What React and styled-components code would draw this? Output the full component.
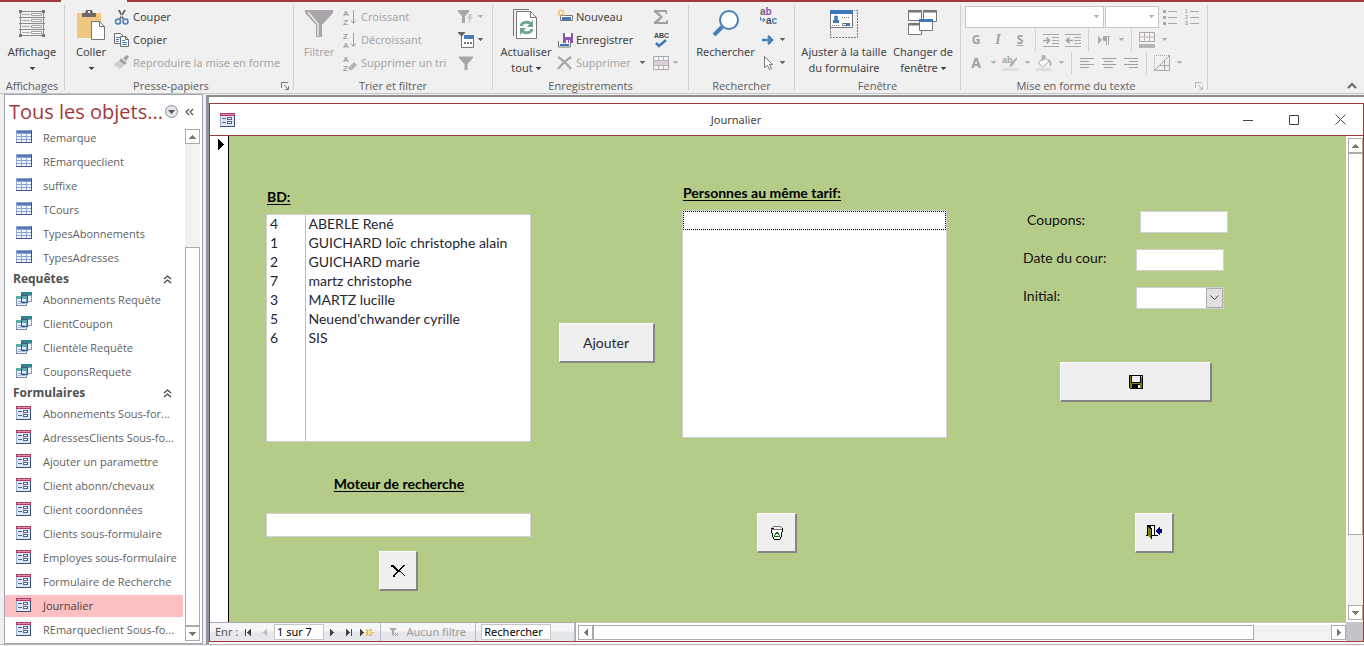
import React from "react";
import styled, { createGlobalStyle, css } from "styled-components";

const RED = "#a4373a";
const GREY = "#ababab";

const Global = createGlobalStyle`
  * { box-sizing: border-box; }
  html, body { margin: 0; padding: 0; }
  body { background: #f0f0f0; color: #444; font: 11px/16px "Noto Sans", "Open Sans", sans-serif; }
  button, input, select { font: inherit; color: inherit; margin: 0; padding: 0; border: 0; border-radius: 0; background: none; }
  svg { display: block; flex: none; overflow: visible; }
  ul { list-style: none; margin: 0; padding: 0; }
`;

const Page = styled.div`
  display: flex;
  flex-direction: column;
  min-height: 100vh;
`;

/* ---------- ribbon ---------- */

const TabEdge = styled.div`
  display: flex;
  height: 2px;
  background: ${RED};
`;
const ActiveTabFoot = styled.div`
  width: 66px;
  margin-left: 61px;
  background: #f0f0f0;
`;
const Ribbon = styled.header`
  display: flex;
  height: 92px;
  padding-top: 3px;
  border-bottom: 1px solid #c6c6c6;
`;
const Group = styled.section`
  display: flex;
  flex-direction: column;
  flex: none;
  width: ${(p) => p.$width}px;
  height: 85px;
  border-right: 1px solid #d0d0d0;
`;
const GroupBody = styled.div`
  display: flex;
  flex: none;
  height: 75px;
  padding-left: ${(p) => p.$inset || 0}px;
`;
const GroupFoot = styled.div`
  display: flex;
  flex: none;
  align-items: center;
  height: 12px;
  font-family: "Open Sans", "Noto Sans", sans-serif;
  line-height: 12px;
  color: #5c5c5c;
`;
const GroupName = styled.span`
  flex: 1;
  text-align: center;
`;
const Launcher = styled.button`
  width: 16px;
  display: flex;
  justify-content: center;
  color: ${(p) => (p.disabled ? "#b8b8b8" : "#777")};
`;
const BigButton = styled.button`
  display: flex;
  flex-direction: column;
  align-items: center;
  width: ${(p) => p.$width}px;
  padding-top: 3px;
  white-space: nowrap;
  color: ${(p) => (p.disabled ? "#a6a6a6" : "#444")};
`;
const BigIcon = styled.span`
  height: 36px;
`;
const BigLine = styled.span`
  display: flex;
  align-items: center;
  gap: 3px;
  height: 16px;
`;
const Stack = styled.div`
  display: flex;
  flex-direction: column;
  width: ${(p) => p.$width}px;
`;
const StackRow = styled.div`
  display: flex;
  align-items: center;
  gap: ${(p) => p.$gap || 0}px;
  height: 23px;
`;
const SmallButton = styled.button`
  display: flex;
  align-items: center;
  gap: 3px;
  height: 22px;
  white-space: nowrap;
  color: ${(p) => (p.disabled ? "#a6a6a6" : "#444")};
`;
const DropButton = styled.button`
  display: flex;
  align-items: center;
  justify-content: center;
  width: 12px;
  height: 22px;
  color: ${(p) => (p.disabled ? "#b4b4b4" : "#666")};
`;
const FontBoxes = styled.div`
  display: flex;
  gap: 1px;
  height: 22px;
  align-items: center;
`;
const FakeSelect = styled.span`
  display: grid;
  align-items: center;
  width: ${(p) => p.$width}px;
  height: 22px;
  border: 1px solid #c6c6c6;
  background: #fff;
  color: #b4b4b4;
  > * { grid-area: 1 / 1; }
  > svg { justify-self: end; margin-right: 4px; pointer-events: none; }
`;
const BareSelect = styled.select`
  appearance: none;
  width: 100%;
  height: 100%;
  opacity: 1;
`;
const Tool = styled.button`
  display: flex;
  align-items: center;
  justify-content: center;
  width: 22px;
  height: 22px;
  font-size: ${(p) => (p.$large ? 14 : 12)}px;
  font-weight: ${(p) => (p.$bold ? 700 : 400)};
  font-style: ${(p) => (p.$italic ? "italic" : "normal")};
  font-family: ${(p) => (p.$italic ? '"Liberation Serif", serif' : "inherit")};
  text-decoration: ${(p) => (p.$underline ? "underline" : "none")};
  color: #a0a0a0;
`;
const ToolSep = styled.span`
  width: 1px;
  height: 22px;
  margin: 0 4px;
  background: #d0d0d0;
`;
const RibbonFill = styled.div`
  flex: 1;
  display: flex;
  align-items: flex-end;
  justify-content: flex-end;
  padding: 0 7px 4px 0;
`;

const Caret = () => (
  <svg width="5" height="3" viewBox="0 0 5 3" shapeRendering="crispEdges">
    <path d="M0 0h5v1H4v1H3v1H2V2H1V1H0z" fill="currentColor" />
  </svg>
);
const Drop = ({ disabled, label }) => (
  <DropButton disabled={disabled} aria-label={label}>
    <Caret />
  </DropButton>
);
const LaunchIcon = () => (
  <svg width="8" height="8" viewBox="0 0 8 8" fill="none" stroke="currentColor">
    <path d="M.5 6V.5H7" />
    <path d="M3 3l4 4M7.500 4v3.500H4" />
  </svg>
);

const S = ({ w = 16, h = 16, children, ...r }) => (
  <svg width={w} height={h} viewBox={`0 0 ${w} ${h}`} fill="none" aria-hidden="true" {...r}>
    {children}
  </svg>
);

const ViewIcon = () => (
  <S w={26} h={32}>
    <g stroke="#8a8a8a">
      <path d="M1.500 2v27M24.500 2v27M0 3.500h26M0 9.500h26M0 15.500h26M0 21.500h26M0 27.500h26" />
      <path d="M3 6.500h8M3 12.500h8M3 18.500h8M3 24.500h8" stroke="#a8a8a8" />
      <path d="M12.500 5.500h10v2h-10zM12.500 11.500h10v2h-10zM12.500 17.500h10v2h-10zM12.500 23.500h10v2h-10z" fill="#fff" stroke="#a0a0a0" />
    </g>
    <path d="M0 2h3v3H0zM23 2h3v3h-3zM0 26h3v3H0zM23 26h3v3h-3z" fill="#767676" />
  </S>
);
const PasteIcon = () => (
  <S w={30} h={32}>
    <path d="M1 5h24v25H1z" fill="#eec880" />
    <path d="M6 5h3l1-3h6l1 3h3v4H6z" fill="#6b6b6b" />
    <path d="M12 3h2v2h-2z" fill="#f0f0f0" />
    <path d="M15.500 13.500h8l5 5v13h-13z" fill="#fff" stroke="#777" />
    <path d="M23.500 13.500v5h5" stroke="#777" />
  </S>
);
const CutIcon = () => (
  <S>
    <path d="M4 1l2 0 4 9-1 1zM12 1l-2 0-5 9 1 1z" fill="#5f5f5f" />
    <circle cx="4" cy="12.500" r="2.500" stroke="#4a7ebb" strokeWidth="1.500" />
    <circle cx="11.500" cy="12.500" r="2.500" stroke="#4a7ebb" strokeWidth="1.500" />
  </S>
);
const CopyIcon = () => (
  <S>
    <path d="M.5 1.500h6l3 3v7h-9z" fill="#fff" stroke="#6b6b6b" />
    <path d="M2 5.500h4M2 7.500h3M2 9.500h3" stroke="#4a7ebb" />
    <path d="M6.500 4.500h5l3 3v7h-8z" fill="#fff" stroke="#6b6b6b" />
    <path d="M11.500 4.500v3h3" stroke="#6b6b6b" />
    <path d="M8 8.500h3M8 10.500h5M8 12.500h5" stroke="#4a7ebb" />
  </S>
);
const BrushIcon = () => (
  <S>
    <path d="M13 0l2 2-3 4-3-3z" fill="#a6a2a6" />
    <path d="M7 3l6 5-3 2-5-4z" fill="#a6a2a6" />
    <path d="M4 6l6 4-4 4H4l1-2-4-1-1-2z" fill="#d2ccd2" />
  </S>
);
const FunnelIcon = ({ big }) => (
  <S w={big ? 28 : 16} h={big ? 32 : 16} viewBox={big ? "0 0 28 32" : "0 -1 28 32"}>
    <path d="M0 2h28v3L17 17v12h-6V17L0 5z" fill="#aaa5aa" />
    {big && <path d="M3 4l10 12v12" stroke="#e8e8e8" strokeWidth="1.500" />}
  </S>
);
const SortIcon = ({ a, b, erase }) => (
  <S fontFamily="Liberation Sans, sans-serif" fontSize="8" fontWeight="700">
    <text x="1" y="7" fill="#a0a0a0">{a}</text>
    <text x="1" y="16" fill="#a0a0a0">{b}</text>
    {erase ? (
      <path d="M12 7l3 3-5 5H7l-1-2z" fill="#b9b3b9" />
    ) : (
      <path d="M11.500 1v13M9 11.500l2.500 3 2.500-3" stroke="#a0a0a0" />
    )}
  </S>
);
const FilterBoltIcon = () => (
  <S>
    <path d="M0 1h11v2L7 7v7H4V7L0 3z" fill="#aaa5aa" />
    <path d="M11 5h3l-1 3h2l-5 7 1-5H9z" fill="#cfc8cf" />
  </S>
);
const FilterFormIcon = () => (
  <S>
    <path d="M0 0h7v1L4 4v3H3V4L0 1z" fill="#666" />
    <path d="M3.500 6v9.500h12V4" fill="#fff" stroke="#777" />
    <path d="M6 3h10v4H6z" fill="#4a7ebb" />
    <path d="M6 10h2v2H6zM9 10h2v2H9zM12 10h2v2h-2z" fill="#777" />
  </S>
);
const RefreshIcon = () => (
  <S w={26} h={32}>
    <path d="M.5 28V1.500H16" stroke="#767676" />
    <path d="M3.500 3.500h14l6 6v21h-20z" fill="#fff" stroke="#767676" />
    <path d="M17.500 3.500v6h6" stroke="#767676" />
    <g stroke="#6fa58b" strokeWidth="3">
      <path d="M8 18c1-4 7-5 10-2M19 21c-1 4-7 5-10 2" />
    </g>
    <path d="M20 12v7h-6zM7 27v-7h6z" fill="#6fa58b" />
  </S>
);
const NewIcon = () => (
  <S>
    <path d="M3.500 6.500h12v5h-12z" fill="#fff" stroke="#767676" />
    <path d="M5 8h9v3H5z" fill="#3f78ba" />
    <path d="M4 0v8M0 4h8M1 1l6 6M7 1L1 7" stroke="#e9b04e" />
    <path d="M3 3h2v2H3z" fill="#fff" />
  </S>
);
const SaveRecordIcon = () => (
  <S>
    <path d="M1.500 9v6h12v-4" stroke="#767676" />
    <path d="M3 12h9v2H3z" fill="#3f78ba" />
    <path d="M6 1h10v10H6z" fill="#8a55ac" />
    <path d="M8 1h6v4H8zM9 8h4v3H9z" fill="#fff" />
    <path d="M11 8h1v3h-1z" fill="#8a55ac" />
  </S>
);
const DeleteIcon = () => (
  <S>
    <path d="M1 2c5 3 9 7 13 12M14 2C9 5 5 9 1 14" stroke="#a9a9a9" strokeWidth="2.500" />
  </S>
);
const SigmaIcon = () => (
  <S>
    <path d="M1 1h13v4h-1l-1-2H5l5 5-5 5h8l1-2h1v4H1v-2l6-5-6-5z" fill="#a0a0a0" />
  </S>
);
const SpellIcon = () => (
  <S fontFamily="Liberation Sans, sans-serif" fontSize="7" fontWeight="700">
    <text x="1" y="6" fill="#444">ABC</text>
    <path d="M3 11l3 3 7-6" stroke="#3f78ba" strokeWidth="2.500" />
  </S>
);
const DataGridIcon = () => (
  <S>
    <path d="M.5 1.500h15v13H.5z" fill="#f6f2f6" stroke="#a9a9a9" />
    <path d="M1 8h14" stroke="#dccfdc" strokeWidth="5" />
    <path d="M5.500 2v3M10.500 2v3M5.500 11v3M10.500 11v3M1 5.500h14M1 10.500h14" stroke="#b9b4b9" />
  </S>
);
const RowColourIcon = () => (
  <S>
    <path d="M.5 .5h15v9H.5z" fill="#f6f2f6" stroke="#a9a9a9" />
    <path d="M5.500 1v9M10.500 1v9M1 5h14" stroke="#b9b4b9" />
    <path d="M0 12h16v4H0z" fill="#b5b5b5" />
  </S>
);
const SearchIcon = () => (
  <S w={28} h={32}>
    <circle cx="17" cy="12" r="9" fill="#fff" stroke="#4a7ebb" strokeWidth="2" />
    <path d="M10 19L2 27" stroke="#4a7ebb" strokeWidth="4" />
  </S>
);
const ReplaceIcon = () => (
  <S fontFamily="Liberation Sans, sans-serif" fontSize="10" fontWeight="700">
    <text x="0" y="6"><tspan fill="#666">a</tspan><tspan fill="#8a55ac">b</tspan></text>
    <text x="6" y="15"><tspan fill="#555">a</tspan><tspan fill="#3f78ba">c</tspan></text>
    <path d="M.5 8v3H5M3 9l2 2-2 2" stroke="#3f78ba" />
  </S>
);
const GoIcon = () => (
  <S>
    <path d="M2 8h9M8 4l4 4-4 4" stroke="#4a7ebb" strokeWidth="2.500" />
  </S>
);
const PointerIcon = () => (
  <S>
    <path d="M4.500 1.500v11l3-2 2 4 2-1-2-4h3z" fill="#fff" stroke="#767676" />
  </S>
);
const FitFormIcon = () => (
  <S w={28} h={32}>
    <path d="M.5 20v9.500h27V2.500H24" stroke="#767676" strokeDasharray="2 1" />
    <path d="M.5 2.500h22v17H.5z" fill="#fff" stroke="#767676" />
    <path d="M0 2h23v4H0z" fill="#3f78ba" />
    <circle cx="6" cy="9.500" r="2" fill="#3f78ba" />
    <path d="M3 15v-2q0-2 3-2t3 2v2z" fill="#3f78ba" />
    <path d="M12 9.500h8M2 17.500h8" stroke="#767676" strokeDasharray="1 1" />
    <path d="M12.500 15.500h7v2h-7z" stroke="#767676" />
    <path d="M16 15h4v3h-4z" fill="#3f78ba" />
  </S>
);
const WindowsIcon = () => (
  <S w={30} h={32}>
    <g fill="#fff" stroke="#767676">
      <path d="M.5 2.500h13v10H.5zM15.500 2.500h13v11h-13zM.5 15.500h13v11H.5z" />
      <path d="M0 3.500h14M15 3.500h14M0 16.500h14" strokeWidth="2" />
      <path d="M11.500 11.500h13v11h-13z" />
    </g>
    <path d="M11 11h14v3H11z" fill="#3f78ba" />
  </S>
);
const BulletsIcon = ({ numbered }) => (
  <S fontFamily="Liberation Sans, sans-serif" fontSize="5" fontWeight="700">
    <path d="M6 2.500h9M6 8.500h9M6 14.500h9" stroke="#a9a9a9" />
    {numbered ? (
      <g fill="#a0a0a0">
        <text x="1" y="4">1</text>
        <text x="1" y="10">2</text>
        <text x="1" y="16">3</text>
      </g>
    ) : (
      <path d="M1 1h3v3H1zM1 7h3v3H1zM1 13h3v3H1z" fill="#a9a9a9" />
    )}
  </S>
);
const IndentIcon = ({ out }) => (
  <S>
    <path d="M0 2.500h16M0 14.500h16M9 5.500h7M9 8.500h7M9 11.500h7" stroke="#a9a9a9" />
    <path d={out ? "M8 8.500H2M4.500 5.500l-3 3 3 3" : "M0 8.500h6M3.500 5.500l3 3-3 3"} stroke="#a0a0a0" strokeWidth="1.500" />
  </S>
);
const DirectionIcon = () => (
  <S>
    <path d="M2 4l4 4-4 4z" fill="#a9a9a9" />
    <path d="M9 4.500h5M10.500 4v9M12.500 4v9" stroke="#a9a9a9" />
    <path d="M11 4H9a2 2 0 000 5h2z" fill="#a9a9a9" />
  </S>
);
const HighlightIcon = () => (
  <S fontFamily="Liberation Sans, sans-serif" fontSize="9" fontWeight="700">
    <text x="0" y="8" fill="#a0a0a0">ab</text>
    <path d="M15 2l-6 6-2 4 3-1 5-7z" fill="#a9a9a9" />
    <path d="M0 13h16v3H0z" fill="#e4dce4" />
  </S>
);
const BucketIcon = () => (
  <S>
    <path d="M8 1.500L2.500 8l4 4L13 6.500z" fill="#fff" stroke="#a9a9a9" />
    <path d="M6.500 6V1h2v4M12 5q4 2 2 6" stroke="#a9a9a9" strokeWidth="1.500" />
    <path d="M0 13h16v3H0z" fill="#e4dce4" />
  </S>
);
const AlignIcon = ({ kind }) => {
  const x = { left: 1, center: 3, right: 6 }[kind];
  return (
    <S>
      <path d={`M1 3.500h14M${x} 6.500h9M1 9.500h14M${x} 12.500h9`} stroke="#a0a0a0" />
    </S>
  );
};
const GridlinesIcon = () => (
  <S>
    <path d="M.5 15V.5H15" stroke="#a9a9a9" strokeDasharray="1 1" />
    <path d="M0 15.500h15.500V0M15 1L1 15M10.500 6v9M5 10.500h10" stroke="#a9a9a9" />
  </S>
);
const ChevronUp = () => (
  <S w={10} h={7}>
    <path d="M1 6l4-4 4 4" stroke="#666" strokeWidth="2" />
  </S>
);

/* ---------- workspace and navigation pane ---------- */

const Workspace = styled.main`
  flex: 1;
  display: flex;
  min-height: 0;
`;
const NavPane = styled.nav`
  display: flex;
  flex-direction: column;
  flex: none;
  width: 199px;
  margin-left: 4px;
  border: 1px solid #a0a4b0;
  background: #fff;
`;
const NavHeader = styled.div`
  display: flex;
  align-items: center;
  height: 31px;
  padding: 2px 3px 0 4px;
`;
const NavTitle = styled.h1`
  flex: 1;
  margin: 0;
  font-family: "Open Sans", "Noto Sans", sans-serif;
  font-size: 20px;
  line-height: 30px;
  font-weight: 400;
  white-space: nowrap;
  color: ${RED};
`;
const HeaderButton = styled.button`
  display: flex;
  justify-content: center;
  width: ${(p) => p.$width}px;
  color: #555;
`;
const NavBody = styled.div`
  display: flex;
  flex: 1;
`;
const NavList = styled.div`
  flex: 1;
  min-width: 0;
  font-family: "Open Sans", "Noto Sans", sans-serif;
`;
const NavHeading = styled.h2`
  display: flex;
  align-items: center;
  justify-content: space-between;
  height: 18px;
  margin: 0;
  padding: 0 11px 0 8px;
  font-size: 12px;
  line-height: 18px;
  color: #505050;
`;
const NavItem = styled.button`
  display: flex;
  align-items: center;
  gap: 11px;
  width: 100%;
  height: 24px;
  padding-left: 11px;
  border: solid transparent;
  border-width: 1px 0;
  background: ${(p) => (p.$active ? "#fcc0c3" : "transparent")};
  background-clip: padding-box;
  white-space: nowrap;
  color: ${(p) => (p.$active ? "#444" : "#5f5f5f")};
  > svg { margin-bottom: 2px; }
`;

const Scroll = styled.div`
  display: flex;
  flex: none;
  flex-direction: ${(p) => (p.$horizontal ? "row" : "column")};
  ${(p) => (p.$horizontal ? css`height: 15px;` : css`width: 15px;`)}
  background: #f2f2f2;
`;
const ScrollEnd = styled.button`
  display: flex;
  flex: none;
  align-items: center;
  justify-content: center;
  width: 15px;
  height: 15px;
  border: 1px solid ${GREY};
  background: #fff;
  color: #777;
`;
const Thumb = styled.div`
  flex: ${(p) => p.$share} 1 0;
  border: 1px solid ${GREY};
  background: #fff;
`;
const Track = styled.div`
  flex: ${(p) => p.$share} 1 0;
`;

const Arrow = ({ dir }) => {
  const d = {
    up: "M3 0h1v1h1v1h1v1h1v1H0V3h1V2h1V1h1z",
    down: "M0 0h7v1H6v1H5v1H4v1H3V3H2V2H1V1H0z",
    left: "M4 0v7H3V6H2V5H1V4H0V3h1V2h1V1h1V0z",
    right: "M0 0h1v1h1v1h1v1h1v1H3v1H2v1H1v1H0z",
  }[dir];
  const tall = dir === "left" || dir === "right";
  return (
    <S w={tall ? 4 : 7} h={tall ? 7 : 4} shapeRendering="crispEdges">
      <path d={d} fill="currentColor" />
    </S>
  );
};
const ScrollBar = ({ horizontal, before, thumb, after }) => (
  <Scroll $horizontal={horizontal}>
    <ScrollEnd aria-label="Défiler en arrière"><Arrow dir={horizontal ? "left" : "up"} /></ScrollEnd>
    {before > 0 && <Track $share={before} />}
    <Thumb $share={thumb} />
    {after > 0 && <Track $share={after} />}
    <ScrollEnd aria-label="Défiler en avant"><Arrow dir={horizontal ? "right" : "down"} /></ScrollEnd>
  </Scroll>
);

const TableIcon = () => (
  <S h={14} shapeRendering="crispEdges">
    <path d="M0 0h16v13H0z" fill="#3d5788" />
    <path d="M0 0h15v12H0z" fill="#8aa5d4" />
    <path d="M1 1h14v2H1z" fill="#5577b3" />
    <path d="M1 4h4v2H1zM6 4h4v2H6zM11 4h4v2h-4zM1 7h4v2H1zM6 7h4v2H6zM11 7h4v2h-4zM1 10h4v2H1zM6 10h4v2H6zM11 10h4v2h-4z" fill="#f2f6fd" />
  </S>
);
const QueryIcon = () => (
  <S shapeRendering="crispEdges">
    <path d="M5 1h11v10H5z" fill="#7d9bb5" />
    <path d="M5 1h11v3H5z" fill="#2f8587" />
    <path d="M12 5h3v5h-3z" fill="#edf3fa" />
    <path d="M0 5h11v10H0z" fill="#6f8fb0" />
    <path d="M0 5h11v3H0z" fill="#5fa8a6" />
    <path d="M1 8h9v6H1z" fill="#edf3fa" />
    <path d="M2 10h3v1H2zM2 12h3v1H2zM6 10h3v1H6zM6 12h3v1H6z" fill="#8aa6c8" />
    <path d="M5 4h6v7H5z" fill="none" stroke="#35598a" />
  </S>
);
const FormIcon = () => (
  <S w={16} h={14} shapeRendering="crispEdges">
    <path d="M0 0h15v14H0z" fill="#3d4f74" />
    <path d="M0 0h14v13H0z" fill="#9db3d8" />
    <path d="M0 0h15v3H0z" fill="#ad3a68" />
    <path d="M1 1h13v1H1z" fill="#dd8fab" />
    <path d="M1 3h13v10H1z" fill="#dfe7f7" />
    <path d="M2 5h4v1H2zM2 9h4v1H2zM7 4h5v3H7zM7 8h5v3H7z" fill="#52638c" />
    <path d="M8 5h3v1H8zM8 9h3v1H8z" fill="#fff" />
  </S>
);
const DoubleUp = () => (
  <S w={9} h={9}>
    <path d="M1 4l3.500-3L8 4M1 8l3.500-3L8 8" stroke="#444" strokeWidth="1.300" />
  </S>
);

const NAV = [
  { icon: TableIcon, items: ["Remarque", "REmarqueclient", "suffixe", "TCours", "TypesAbonnements", "TypesAdresses"] },
  { title: "Requêtes", icon: QueryIcon, items: ["Abonnements Requête", "ClientCoupon", "Clientèle Requête", "CouponsRequete"] },
  {
    title: "Formulaires",
    icon: FormIcon,
    items: [
      "Abonnements Sous-for...",
      "AdressesClients Sous-fo...",
      "Ajouter un paramettre",
      "Client abonn/chevaux",
      "Client coordonnées",
      "Clients sous-formulaire",
      "Employes sous-formulaire",
      "Formulaire de Recherche",
      "Journalier",
      "REmarqueclient Sous-fo...",
    ],
  },
];

const NavScroll = styled.div`
  display: flex;
  padding: 3px 2px 2px 2px;
`;

/* ---------- form window ---------- */

const Desk = styled.div`
  display: flex;
  flex: 1;
  min-width: 0;
  margin: 1px 0 0 3px;
  padding: 6px 0 2px 0;
  border-top: 2px solid #8c8c8c;
  border-left: 3px solid #90949c;
  background: #fff;
`;
const Window = styled.section`
  display: flex;
  flex-direction: column;
  flex: 1;
  min-width: 0;
  border: 1px solid ${RED};
`;
const TitleBar = styled.div`
  display: grid;
  grid-template-columns: 1fr auto 1fr;
  align-items: center;
  height: 32px;
  padding: 0 0 0 10px;
  border-bottom: 1px solid ${RED};
`;
const WindowTitle = styled.h2`
  margin: 0;
  padding-right: 111px;
  font-size: 11px;
  font-weight: 400;
`;
const WindowButtons = styled.div`
  display: flex;
  justify-content: flex-end;
`;
const WindowButton = styled.button`
  display: flex;
  align-items: center;
  justify-content: center;
  width: 46px;
  height: 31px;
`;
const Content = styled.div`
  display: flex;
  flex: 1;
`;
const RecordSelector = styled.div`
  width: 19px;
  padding: 3px 0 0 8px;
  border-right: 1px solid #000;
`;
const Form = styled.form`
  display: grid;
  grid-template-columns: 265px 151px 265px 1fr;
  grid-template-rows: 259px auto;
  flex: 1;
  padding: 47px 0 31px 37px;
  background: #b5cc88;
  font: 14px/20px Lato, "Open Sans", sans-serif;
  color: #111;
`;
const Cell = styled.div`
  display: flex;
  flex-direction: column;
  align-items: ${(p) => p.$align || "stretch"};
  padding-top: ${(p) => p.$top || 0}px;
  padding-left: ${(p) => p.$left || 0}px;
`;
const Caption = styled.label`
  margin-bottom: ${(p) => p.$after || 7}px;
  padding-left: 1px;
  font-weight: 700;
  text-decoration: underline;
  text-underline-offset: 2px;
  color: #000;
`;
const ListFrame = styled.div`
  height: 228px;
  border: 1px solid #d0d0d0;
  background: #fff;
`;
const People = styled.table`
  width: 100%;
  height: 100%;
  border-collapse: collapse;
  color: #1f2633;
  line-height: 18px;
`;
const Num = styled.td`
  width: 38px;
  height: ${(p) => (p.$fill ? "auto" : "19px")};
  padding: 0 0 0 3px;
  border-right: 1px solid #bdbdbd;
  vertical-align: top;
`;
const Name = styled.td`
  padding: 0 0 0 3px;
  vertical-align: top;
`;
const EmptyOption = styled.div`
  height: 19px;
  border: 1px dotted #000;
`;
const PushButton = styled.button`
  display: flex;
  flex: none;
  align-items: center;
  justify-content: center;
  width: ${(p) => p.$width}px;
  height: 40px;
  border: solid;
  border-width: 1px 2px 2px 1px;
  border-color: #fff #858585 #858585 #fff;
  background: #efefef;
  color: #1f2633;
`;
const TextBox = styled.input`
  width: ${(p) => (p.$width ? p.$width + "px" : "100%")};
  height: ${(p) => p.$height || 22}px;
  border: 1px solid #d0d0d0;
  background: #fff;
`;
const Field = styled.div`
  display: flex;
  height: 22px;
  margin: 0 0 16px ${(p) => p.$indent || 0}px;
`;
const FieldLabel = styled.label`
  width: 113px;
  line-height: 18px;
`;
const Combo = styled.span`
  display: grid;
  grid-template-columns: 1fr 17px;
  width: 88px;
  border: 1px solid #d0d0d0;
  background: #fff;
`;
const ComboSelect = styled.select`
  grid-area: 1 / 1 / 2 / 3;
  appearance: none;
`;
const ComboArrow = styled.span`
  grid-area: 1 / 2;
  display: flex;
  align-items: center;
  justify-content: center;
  border: 1px solid #adadad;
  background: #e1e1e1;
  pointer-events: none;
`;
const SideScroll = styled.div`
  display: flex;
  padding: 2px 0 2px 2px;
`;

const Status = styled.div`
  display: flex;
  height: 19px;
  background: linear-gradient(#f6f6f8 0 45%, #e6e7eb 55% 100%);
  color: #555;
`;
const Records = styled.div`
  display: flex;
  align-items: center;
  flex: none;
  width: 366px;
  border: solid #a9acb4;
  border-width: 1px 1px 0 0;
`;
const Section = styled.div`
  display: flex;
  align-items: center;
  gap: ${(p) => p.$gap || 0}px;
  width: ${(p) => p.$width}px;
  height: 18px;
  padding-left: ${(p) => p.$left || 5}px;
  border-right: 1px solid #b9bcc4;
  color: ${(p) => (p.$dim ? "#999" : "#555")};
  white-space: nowrap;
`;
const StepButton = styled.button`
  display: flex;
  align-items: center;
  justify-content: center;
  width: 17px;
  height: 16px;
  color: ${(p) => (p.disabled ? "#bbb" : "#444")};
`;
const StatusInput = styled.input`
  width: ${(p) => p.$width}px;
  height: 16px;
  padding-left: 2px;
  border: 1px solid #c6c6c6;
  background: #fff;
  color: #000;
`;
const StatusName = styled.span`
  width: 25px;
`;
const BottomScroll = styled.div`
  flex: 1;
  padding: 2px 0 2px 2px;
  border-top: 1px solid #c6c6c6;
  background: #fff;
`;
const Corner = styled.div`
  width: 17px;
  background: #c3c5ca;
`;
const Footer = styled.footer`
  height: 3px;
  border-top: 1px solid #b9b9b9;
`;

const StepIcon = ({ kind }) => (
  <S w={kind === "new" ? 14 : 7} h={9} shapeRendering="crispEdges">
    {kind === "first" && <path d="M0 1h1v7H0zM6 1v7H5V7H4V6H3V5H2V4h1V3h1V2h1V1z" fill="currentColor" />}
    {kind === "prev" && <path d="M5 1v7H4V7H3V6H2V5H1V4h1V3h1V2h1V1z" fill="currentColor" />}
    {kind === "next" && <path d="M1 1h1v1h1v1h1v1h1v1H4v1H3v1H2v1H1z" fill="currentColor" />}
    {kind === "last" && <path d="M0 1h1v1h1v1h1v1h1v1H3v1H2v1H1v1H0zM5 1h1v7H5z" fill="currentColor" />}
    {kind === "new" && (
      <>
        <path d="M0 1h1v1h1v1h1v1h1v1H3v1H2v1H1v1H0z" fill="currentColor" />
        <path d="M9 1v7M5.500 4.500h8M6 1.500l6 6M12 1.500l-6 6" stroke="#e5b933" />
        <path d="M8 3h3v3H8z" fill="#f8e38a" />
      </>
    )}
  </S>
);
const FloppyIcon = () => (
  <S w={14} h={14} shapeRendering="crispEdges">
    <path d="M0 0h14v14H1v-1H0z" fill="#000" />
    <path d="M1 1h1v7h10V2h1v11H1z" fill="#808000" />
    <path d="M3 1h8v6H3zM12 1h1v1h-1z" fill="#efefef" />
    <path d="M3 9h8v4H3z" fill="#000" />
    <path d="M9 10h2v3H9z" fill="#efefef" />
  </S>
);
const CrossIcon = () => (
  <S w={14} h={14} shapeRendering="crispEdges">
    <path d="M0 1h3v1h1v1h1v1h1v1h1v1h1V5h1V4h1V3h1V2h1V1h2v1h-1v1h-1v1h-1v1h-1v1H9v1h1v1h1v1h1v1h1v1h1v1h-1v-1h-1v-1h-1v-1h-1v-1H9V8H7v1H6v1H5v1H4v2H2v-2h1v-1h1V9h1V8h1V7H5V6H4V5H3V4H2V3H0z" fill="#000" />
  </S>
);
const BinIcon = () => (
  <S w={14} h={14} shapeRendering="crispEdges">
    <path d="M1 3h12l-2 10H3z" fill="#fff" />
    <path d="M3 0h8v1H3zM2 1h1v1H2zM11 1h1v1h-1zM1 3h11v1H1z" fill="#777" />
    <path d="M1 2h3v1H1zM12 2h1v4h-1zM1 4h1v3H1zM2 7h1v4H2zM11 6h1v5h-1zM3 11h1v2H3zM10 11h1v2h-1zM4 13h6v1H4z" fill="#000" />
    <path d="M6 6h2v1h1v2h1v2H8v-1h1V9H8V8H6v1H5v1h3v1H4V9h1V7h1z" fill="#008000" />
  </S>
);
const DoorIcon = () => (
  <S w={17} h={15} shapeRendering="crispEdges">
    <path d="M1 0h8v10h3v1H0v-1h1z" fill="#000" />
    <path d="M5 1h3v9H5z" fill="#fff" />
    <path d="M1 0h1l4 3v12l-4-4H1z" fill="#000" />
    <path d="M2 2h1v1h1v1h1v9H4v-1H3v-1H2z" fill="#808000" />
    <path d="M10 5h1V4h1V3h1V2h1v2h2v4h-2v2h-1V9h-1V8h-1V7h-1z" fill="#000080" />
  </S>
);

const PEOPLE = [
  [4, "ABERLE René"],
  [1, "GUICHARD loïc christophe alain"],
  [2, "GUICHARD marie"],
  [7, "martz christophe"],
  [3, "MARTZ lucille"],
  [5, "Neuend'chwander cyrille"],
  [6, "SIS"],
];

function RibbonBar() {
  return (
    <Ribbon>
      <Group $width={65}>
        <GroupBody $inset={2}>
          <BigButton $width={60}>
            <BigIcon><ViewIcon /></BigIcon>
            <BigLine>Affichage</BigLine>
            <BigLine><Caret /></BigLine>
          </BigButton>
        </GroupBody>
        <GroupFoot><GroupName>Affichages</GroupName></GroupFoot>
      </Group>

      <Group $width={229}>
        <GroupBody $inset={3}>
          <BigButton $width={46}>
            <BigIcon><PasteIcon /></BigIcon>
            <BigLine>Coller</BigLine>
            <BigLine><Caret /></BigLine>
          </BigButton>
          <Stack>
            <StackRow><SmallButton><CutIcon />Couper</SmallButton></StackRow>
            <StackRow><SmallButton><CopyIcon />Copier</SmallButton></StackRow>
            <StackRow><SmallButton disabled><BrushIcon />Reproduire la mise en forme</SmallButton></StackRow>
          </Stack>
        </GroupBody>
        <GroupFoot>
          <GroupName>Presse-papiers</GroupName>
          <Launcher aria-label="Options du presse-papiers"><LaunchIcon /></Launcher>
        </GroupFoot>
      </Group>

      <Group $width={199}>
        <GroupBody $inset={2}>
          <BigButton $width={46} disabled>
            <BigIcon><FunnelIcon big /></BigIcon>
            <BigLine>Filtrer</BigLine>
          </BigButton>
          <Stack $width={116}>
            <StackRow><SmallButton disabled><SortIcon a="A" b="Z" />Croissant</SmallButton></StackRow>
            <StackRow><SmallButton disabled><SortIcon a="Z" b="A" />Décroissant</SmallButton></StackRow>
            <StackRow><SmallButton disabled><SortIcon a="A" b="Z" erase />Supprimer un tri</SmallButton></StackRow>
          </Stack>
          <Stack>
            <StackRow><SmallButton disabled aria-label="Sélection"><FilterBoltIcon /></SmallButton><Drop disabled label="Choix de sélection" /></StackRow>
            <StackRow><SmallButton aria-label="Options avancées"><FilterFormIcon /></SmallButton><Drop label="Choix avancés" /></StackRow>
            <StackRow><SmallButton disabled aria-label="Activer le filtre"><FunnelIcon /></SmallButton></StackRow>
          </Stack>
        </GroupBody>
        <GroupFoot><GroupName>Trier et filtrer</GroupName></GroupFoot>
      </Group>

      <Group $width={196}>
        <GroupBody $inset={2}>
          <BigButton $width={62}>
            <BigIcon><RefreshIcon /></BigIcon>
            <BigLine>Actualiser</BigLine>
            <BigLine>tout<Caret /></BigLine>
          </BigButton>
          <Stack $width={96}>
            <StackRow><SmallButton><NewIcon />Nouveau</SmallButton></StackRow>
            <StackRow><SmallButton><SaveRecordIcon />Enregistrer</SmallButton></StackRow>
            <StackRow $gap={6}><SmallButton disabled><DeleteIcon />Supprimer</SmallButton><Drop label="Choix de suppression" /></StackRow>
          </Stack>
          <Stack>
            <StackRow><SmallButton disabled aria-label="Totaux"><SigmaIcon /></SmallButton></StackRow>
            <StackRow><SmallButton aria-label="Orthographe"><SpellIcon /></SmallButton></StackRow>
            <StackRow><SmallButton disabled aria-label="Plus"><DataGridIcon /></SmallButton><Drop disabled label="Plus d'options" /></StackRow>
          </Stack>
        </GroupBody>
        <GroupFoot><GroupName>Enregistrements</GroupName></GroupFoot>
      </Group>

      <Group $width={106}>
        <GroupBody $inset={2}>
          <BigButton $width={69}>
            <BigIcon><SearchIcon /></BigIcon>
            <BigLine>Rechercher</BigLine>
          </BigButton>
          <Stack>
            <StackRow><SmallButton aria-label="Remplacer"><ReplaceIcon /></SmallButton></StackRow>
            <StackRow><SmallButton aria-label="Atteindre"><GoIcon /></SmallButton><Drop label="Choix atteindre" /></StackRow>
            <StackRow><SmallButton aria-label="Sélectionner"><PointerIcon /></SmallButton><Drop label="Choix sélectionner" /></StackRow>
          </Stack>
        </GroupBody>
        <GroupFoot><GroupName>Rechercher</GroupName></GroupFoot>
      </Group>

      <Group $width={166}>
        <GroupBody $inset={4}>
          <BigButton $width={90}>
            <BigIcon><FitFormIcon /></BigIcon>
            <BigLine>Ajuster à la taille</BigLine>
            <BigLine>du formulaire</BigLine>
          </BigButton>
          <BigButton $width={68}>
            <BigIcon><WindowsIcon /></BigIcon>
            <BigLine>Changer de</BigLine>
            <BigLine>fenêtre<Caret /></BigLine>
          </BigButton>
        </GroupBody>
        <GroupFoot><GroupName>Fenêtre</GroupName></GroupFoot>
      </Group>

      <Group $width={247}>
        <GroupBody $inset={4}>
          <Stack>
            <StackRow>
              <FontBoxes>
                <FakeSelect $width={139}><BareSelect disabled aria-label="Police" /><Caret /></FakeSelect>
                <FakeSelect $width={54}><BareSelect disabled aria-label="Taille de police" /><Caret /></FakeSelect>
              </FontBoxes>
              <Tool disabled aria-label="Puces"><BulletsIcon /></Tool>
              <Tool disabled aria-label="Numérotation"><BulletsIcon numbered /></Tool>
            </StackRow>
            <StackRow>
              <Tool disabled $bold>G</Tool>
              <Tool disabled $bold $italic $large>I</Tool>
              <Tool disabled $bold $underline>S</Tool>
              <ToolSep />
              <Tool disabled aria-label="Augmenter le retrait"><IndentIcon /></Tool>
              <Tool disabled aria-label="Diminuer le retrait"><IndentIcon out /></Tool>
              <ToolSep />
              <Tool disabled aria-label="De gauche à droite"><DirectionIcon /></Tool>
              <Drop disabled label="Choix de direction" />
              <ToolSep />
              <Tool disabled aria-label="Couleur de ligne"><RowColourIcon /></Tool>
              <Drop disabled label="Choix de couleur de ligne" />
            </StackRow>
            <StackRow>
              <Tool disabled $bold $large>A</Tool>
              <Drop disabled label="Choix de couleur de police" />
              <Tool disabled aria-label="Surlignage"><HighlightIcon /></Tool>
              <Drop disabled label="Choix de surlignage" />
              <Tool disabled aria-label="Couleur de fond"><BucketIcon /></Tool>
              <Drop disabled label="Choix de couleur de fond" />
              <ToolSep />
              <Tool disabled aria-label="Aligner à gauche"><AlignIcon kind="left" /></Tool>
              <Tool disabled aria-label="Centrer"><AlignIcon kind="center" /></Tool>
              <Tool disabled aria-label="Aligner à droite"><AlignIcon kind="right" /></Tool>
              <ToolSep />
              <Tool disabled aria-label="Quadrillage"><GridlinesIcon /></Tool>
              <Drop disabled label="Choix de quadrillage" />
            </StackRow>
          </Stack>
        </GroupBody>
        <GroupFoot>
          <GroupName>Mise en forme du texte</GroupName>
          <Launcher disabled aria-label="Options du texte"><LaunchIcon /></Launcher>
        </GroupFoot>
      </Group>
      <RibbonFill>
        <button aria-label="Réduire le ruban"><ChevronUp /></button>
      </RibbonFill>
    </Ribbon>
  );
}

function Navigation() {
  return (
    <NavPane>
      <NavHeader>
        <NavTitle>Tous les objets...</NavTitle>
        <HeaderButton $width={16} aria-label="Catégories">
          <S w={13} h={13}>
            <circle cx="6.500" cy="6.500" r="6" fill="#e3e6ea" stroke="#8a8f98" />
            <path d="M3 5h7L6.500 9z" fill="#555" />
          </S>
        </HeaderButton>
        <HeaderButton $width={20} aria-label="Réduire le volet">
          <S w={9} h={8}>
            <path d="M4 1L1 4l3 3M8 1L5 4l3 3" stroke="#555" strokeWidth="1.300" />
          </S>
        </HeaderButton>
      </NavHeader>
      <NavBody>
        <NavList>
          {NAV.map(({ title, icon: Icon, items }) => (
            <React.Fragment key={title || "tables"}>
              {title && <NavHeading>{title}<DoubleUp /></NavHeading>}
              <ul>
                {items.map((name) => (
                  <li key={name}>
                    <NavItem $active={name === "Journalier"}><Icon />{name}</NavItem>
                  </li>
                ))}
              </ul>
            </React.Fragment>
          ))}
        </NavList>
        <NavScroll><ScrollBar before={103} thumb={377} after={0} /></NavScroll>
      </NavBody>
    </NavPane>
  );
}

function JournalForm() {
  return (
    <Form onSubmit={(e) => e.preventDefault()}>
      <Cell $top={4}>
        <Caption as="span" id="bd">BD:</Caption>
        <ListFrame>
          <People aria-labelledby="bd">
            <tbody>
              {PEOPLE.map(([n, name]) => (
                <tr key={n}><Num>{n}</Num><Name>{name}</Name></tr>
              ))}
              <tr><Num $fill /><Name /></tr>
            </tbody>
          </People>
        </ListFrame>
      </Cell>
      <Cell $top={140} $align="center">
        <PushButton $width={96}>Ajouter</PushButton>
      </Cell>
      <Cell>
        <Caption as="span" id="tarif">Personnes au même tarif:</Caption>
        <ListFrame role="listbox" aria-labelledby="tarif">
          <EmptyOption role="option" aria-selected="false" />
        </ListFrame>
      </Cell>
      <Cell $top={28} $left={76}>
        <Field $indent={4}>
          <FieldLabel htmlFor="coupons">Coupons:</FieldLabel>
          <TextBox id="coupons" $width={88} />
        </Field>
        <Field>
          <FieldLabel htmlFor="date">Date du cour:</FieldLabel>
          <TextBox id="date" $width={88} />
        </Field>
        <Field>
          <FieldLabel htmlFor="initial">Initial:</FieldLabel>
          <Combo>
            <ComboSelect id="initial" />
            <ComboArrow>
              <S w={9} h={6}><path d="M.5 .5l4 4 4-4" stroke="#444" /></S>
            </ComboArrow>
          </Combo>
        </Field>
        <Cell $top={37} $left={37} $align="flex-start">
          <PushButton $width={152} aria-label="Enregistrer la fiche"><FloppyIcon /></PushButton>
        </Cell>
      </Cell>

      <Cell $top={32} $align="center">
        <Caption htmlFor="moteur" $after={19}>Moteur de recherche</Caption>
        <TextBox id="moteur" $height={24} />
        <Cell $top={14}>
          <PushButton $width={39} aria-label="Effacer la recherche"><CrossIcon /></PushButton>
        </Cell>
      </Cell>
      <span />
      <Cell $top={71} $left={75} $align="flex-start">
        <PushButton $width={40} aria-label="Vider la liste"><BinIcon /></PushButton>
      </Cell>
      <Cell $top={71} $left={188} $align="flex-start">
        <PushButton $width={39} aria-label="Fermer le formulaire"><DoorIcon /></PushButton>
      </Cell>
    </Form>
  );
}

export default function App() {
  return (
    <Page>
      <Global />
      <TabEdge><ActiveTabFoot /></TabEdge>
      <RibbonBar />
      <Workspace>
        <Navigation />
        <Desk>
          <Window>
            <TitleBar>
              <FormIcon />
              <WindowTitle>Journalier</WindowTitle>
              <WindowButtons>
                <WindowButton aria-label="Réduire"><S w={10} h={10}><path d="M0 5.500h10" stroke="#444" /></S></WindowButton>
                <WindowButton aria-label="Agrandir"><S w={10} h={10}><path d="M.5 .5h9v9h-9z" stroke="#444" /></S></WindowButton>
                <WindowButton aria-label="Fermer"><S w={11} h={11}><path d="M.5 .5l10 10M10.500 .5l-10 10" stroke="#444" /></S></WindowButton>
              </WindowButtons>
            </TitleBar>
            <Content>
              <RecordSelector>
                <S w={6} h={11} shapeRendering="crispEdges"><path d="M0 0h1v1h1v1h1v1h1v1h1v1h1v1H5v1H4v1H3v1H2v1H1v1H0z" fill="#000" /></S>
              </RecordSelector>
              <JournalForm />
              <SideScroll><ScrollBar before={0} thumb={381} after={70} /></SideScroll>
            </Content>
            <Status>
              <Records>
                <Section $width={171}>
                  <StatusName>Enr :</StatusName>
                  <StepButton aria-label="Premier"><StepIcon kind="first" /></StepButton>
                  <StepButton disabled aria-label="Précédent"><StepIcon kind="prev" /></StepButton>
                  <StatusInput $width={50} defaultValue="1 sur 7" aria-label="Enregistrement" />
                  <StepButton aria-label="Suivant"><StepIcon kind="next" /></StepButton>
                  <StepButton aria-label="Dernier"><StepIcon kind="last" /></StepButton>
                  <StepButton aria-label="Nouvel enregistrement"><StepIcon kind="new" /></StepButton>
                </Section>
                <Section $width={96} $left={8} $gap={8} $dim>
                  <S w={10} h={10}>
                    <path d="M0 1h8L5 4v5L3 8V4z" fill="#aaa" />
                    <path d="M6 6l3 3M9 6L6 9" stroke="#999" />
                  </S>
                  Aucun filtre
                </Section>
                <Section $width={99}>
                  <StatusInput $width={70} defaultValue="Rechercher" aria-label="Rechercher" />
                </Section>
              </Records>
              <BottomScroll><ScrollBar horizontal before={0} thumb={661} after={77} /></BottomScroll>
              <Corner />
            </Status>
          </Window>
        </Desk>
      </Workspace>
      <Footer />
    </Page>
  );
}
